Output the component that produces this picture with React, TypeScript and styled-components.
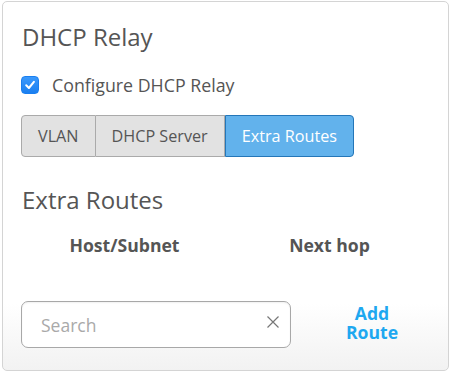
import React, { useState } from "react";
import styled, { createGlobalStyle } from "styled-components";

const Global = createGlobalStyle`
  html, body { margin: 0; padding: 0; background: #ffffff; }
  body { font-family: "Open Sans", "Liberation Sans", sans-serif; color: #555; }
  * { box-sizing: border-box; }
`;

const Card = styled.div`
  margin: 1px 3px 0 2px;
  width: 447px;
  height: 370px;
  border: 1px solid #d4d4d4;
  border-radius: 5px;
  background: linear-gradient(to bottom, #ffffff 0%, #ffffff 82%, #f2f2f2 100%);
  padding: 19px 19px 0 19px;
  display: flex;
  flex-direction: column;
`;

const Title = styled.h2`
  margin: 0;
  font-size: 24px;
  line-height: 32px;
  font-weight: 400;
  color: #555;
`;

const CheckRow = styled.label`
  display: flex;
  align-items: center;
  gap: 13px;
  margin-top: 20px;
  margin-left: -1px;
  height: 24px;
  font-size: 17.8px;
  color: #555;
  cursor: pointer;
`;

const Box = styled.span<{ $on: boolean }>`
  width: 18px;
  height: 18px;
  border-radius: 4px;
  display: inline-flex;
  align-items: center;
  justify-content: center;
  background: ${(p) => (p.$on ? "linear-gradient(#3b99fc, #1a7ff0)" : "#fff")};
  border: 1px solid ${(p) => (p.$on ? "#1a7ff0" : "#999")};
`;

const Tabs = styled.div`
  display: flex;
  margin-top: 18px;
  margin-left: -1px;
  align-self: flex-start;
`;

const Tab = styled.button<{ $active: boolean; $first?: boolean; $last?: boolean }>`
  height: 42px;
  padding: 0 16px;
  font-family: inherit;
  font-size: 16.2px;
  color: ${(p) => (p.$active ? "#fff" : "#555")};
  background: ${(p) => (p.$active ? "#62b2ec" : "#e2e2e2")};
  border: 1px solid ${(p) => (p.$active ? "#2476b8" : "#aaaaaa")};
  border-left-width: ${(p) => (p.$first || p.$active ? "1px" : "0")};
  border-radius: ${(p) =>
    p.$first ? "4px 0 0 4px" : p.$last ? "0 4px 4px 0" : "0"};
  cursor: pointer;
`;

const Section = styled.h3`
  margin: 27px 0 0 0;
  font-size: 24px;
  line-height: 32px;
  font-weight: 400;
  color: #555;
`;

const Table = styled.div`
  display: grid;
  grid-template-columns: 1fr 1fr;
  width: 410px;
  margin-top: 17px;
`;

const Th = styled.div`
  text-align: center;
  font-weight: 700;
  font-size: 17.6px;
  line-height: 24px;
  color: #555;
`;

const Footer = styled.div`
  display: flex;
  align-items: center;
  margin-top: 44px;
  margin-left: -1px;
`;

const SearchBox = styled.div`
  position: relative;
  width: 270px;
  height: 47px;
  border: 1px solid #a8a8a8;
  border-radius: 7px;
  background: #fff;
  box-shadow: inset 0 1px 2px rgba(0, 0, 0, 0.06);
  display: flex;
  align-items: center;
  padding: 0 10px 0 19px;
`;

const SearchInput = styled.input`
  flex: 1;
  min-width: 0;
  border: none;
  outline: none;
  background: transparent;
  font-family: inherit;
  font-size: 17.5px;
  color: #555;
  padding: 0;
  &::placeholder { color: #a9a9a9; }
`;

const Clear = styled.button`
  border: none;
  background: none;
  padding: 0;
  width: 14px;
  height: 14px;
  display: flex;
  margin-top: -5px;
  cursor: pointer;
`;

const AddButton = styled.button`
  border: none;
  background: none;
  width: 70px;
  margin-left: 46px;
  margin-top: -3px;
  font-family: inherit;
  font-size: 17.6px;
  font-weight: 700;
  line-height: 19px;
  color: #1ea8f0;
  text-align: center;
  cursor: pointer;
  padding: 0;
`;

export default function App() {
  const [checked, setChecked] = useState(true);
  const [tab, setTab] = useState(2);
  const [q, setQ] = useState("");
  const tabs = ["VLAN", "DHCP Server", "Extra Routes"];
  return (
    <>
      <Global />
      <Card>
        <Title>DHCP Relay</Title>
        <CheckRow onClick={() => setChecked(!checked)}>
          <Box $on={checked}>
            {checked && (
              <svg width="12" height="12" viewBox="0 0 12 12">
                <path d="M2.2 6.3 L4.9 9 L9.9 2.8" fill="none" stroke="#fff" strokeWidth="2" strokeLinecap="round" strokeLinejoin="round" />
              </svg>
            )}
          </Box>
          Configure DHCP Relay
        </CheckRow>
        <Tabs>
          {tabs.map((t, i) => (
            <Tab
              key={t}
              $active={tab === i}
              $first={i === 0}
              $last={i === tabs.length - 1}
              onClick={() => setTab(i)}
            >
              {t}
            </Tab>
          ))}
        </Tabs>
        <Section>Extra Routes</Section>
        <Table>
          <Th>Host/Subnet</Th>
          <Th>Next hop</Th>
        </Table>
        <Footer>
          <SearchBox>
            <SearchInput placeholder="Search" value={q} onChange={(e) => setQ(e.target.value)} />
            <Clear onClick={() => setQ("")} aria-label="Clear">
              <svg width="14" height="14" viewBox="0 0 14 14">
                <path d="M1.5 1.5 L12.5 12.5 M12.5 1.5 L1.5 12.5" stroke="#777" strokeWidth="1.2" fill="none" />
              </svg>
            </Clear>
          </SearchBox>
          <AddButton>Add Route</AddButton>
        </Footer>
      </Card>
    </>
  );
}
